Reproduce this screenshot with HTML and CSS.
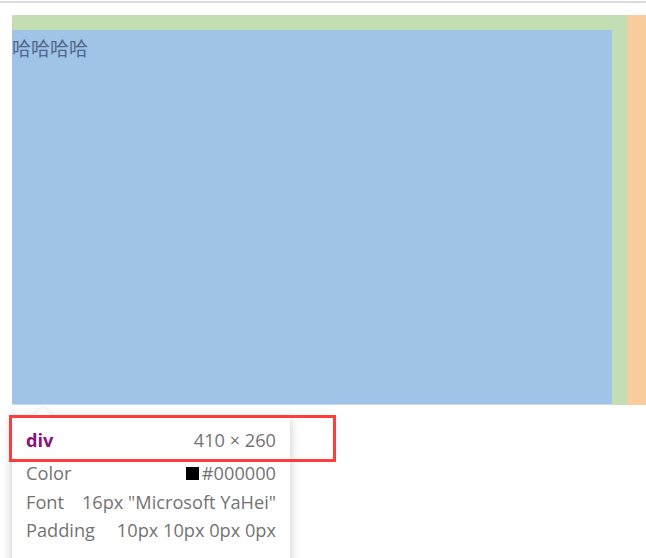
FILE: index.html
```html
<!DOCTYPE html>
<html>
<head>
<meta charset="utf-8">
<link rel="stylesheet" href="styles.css">
</head>
<body>
<div class="topline"></div>
<div class="stage">
  <div class="boxrow">
    <div class="padding-box">
      <div class="content-box">哈哈哈哈</div>
    </div>
    <div class="margin-box"></div>
  </div>
  <div class="tooltip">
    <div class="tip-row tip-head">
      <span class="tag">div</span>
      <span class="dims">410 × 260</span>
    </div>
    <div class="tip-row">
      <span class="label">Color</span>
      <span class="value"><span class="swatch"></span>#000000</span>
    </div>
    <div class="tip-row">
      <span class="label">Font</span>
      <span class="value">16px "Microsoft YaHei"</span>
    </div>
    <div class="tip-row">
      <span class="label">Padding</span>
      <span class="value">10px 10px 0px 0px</span>
    </div>
    <div class="highlight"></div>
  </div>
</div>
</body>
</html>
```

FILE: styles.css
```css
html, body {
  margin: 0;
  padding: 0;
  background: #ffffff;
  overflow: hidden;
}
body {
  width: 646px;
  height: 558px;
}
.topline {
  margin-top: 1px;
  height: 2px;
  background: #dcdcdc;
}
.stage {
  padding-left: 12px;
  padding-top: 12px;
}
.boxrow {
  display: flex;
}
.padding-box {
  background: #c3ddb5;
  padding: 15px 15px 0 0;
}
.content-box {
  width: 600px;
  height: 375px;
  background: #a0c4e8;
  box-shadow: inset 0 -1px 0 #c8dcf0;
  font-family: "Noto Sans CJK SC", sans-serif;
  font-size: 19px;
  line-height: 35px;
  color: #50668a;
}
.margin-box {
  width: 30px;
  background: #f8cc9c;
}
.tooltip {
  position: relative;
  margin-top: 12px;
  width: 250px;
  padding: 8px 14px 40px 14px;
  background: #ffffff;
  box-shadow: 0 2px 10px rgba(0, 0, 0, 0.22);
  font-family: "Open Sans", sans-serif;
  font-size: 18.2px;
  color: #737373;
}
.tooltip::before {
  content: "";
  position: absolute;
  left: 21px;
  top: -10px;
  width: 0;
  height: 0;
  border-left: 10px solid transparent;
  border-right: 10px solid transparent;
  border-bottom: 10px solid #ffffff;
  filter: drop-shadow(0 -2px 2px rgba(0, 0, 0, 0.08));
}
.tip-row {
  display: flex;
  justify-content: space-between;
  align-items: center;
  height: 28.5px;
  white-space: nowrap;
}
.tip-head {
  height: 30px;
  margin-bottom: 4px;
}
.tag {
  color: #881280;
  font-weight: 700;
}
.dims {
  color: #737373;
}
.value {
  display: flex;
  align-items: center;
}
.swatch {
  display: inline-block;
  width: 13px;
  height: 13px;
  background: #000000;
  margin-right: 3px;
}
.highlight {
  position: absolute;
  left: -3px;
  top: -2px;
  width: 321px;
  height: 41px;
  border: 3px solid #ff3b3b;
}
```
